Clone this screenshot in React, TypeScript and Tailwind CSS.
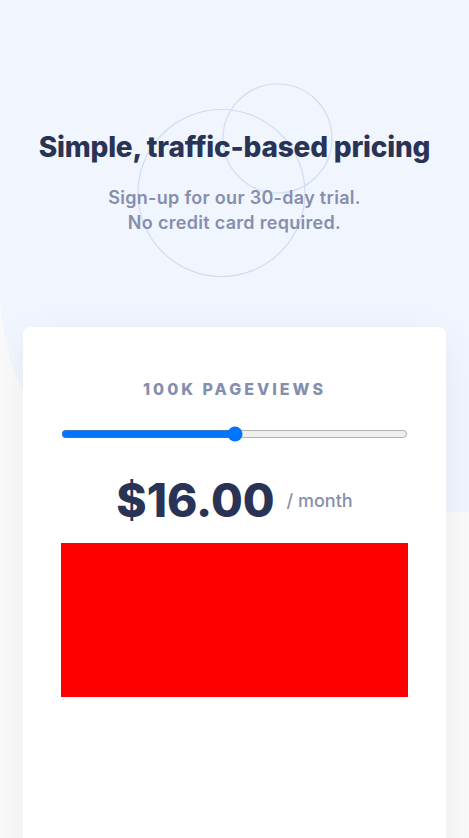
import React from 'react';

const font = { fontFamily: 'Inter, "Noto Sans", sans-serif' };

function Circles() {
  return (
    <svg
      className="absolute left-0 top-0 pointer-events-none"
      width="469"
      height="300"
      viewBox="0 0 469 300"
      fill="none"
    >
      <circle cx="221.5" cy="193" r="83.5" stroke="#d3dbf1" strokeWidth="1.2" />
      <circle cx="277.5" cy="138.5" r="54.5" stroke="#d3dbf1" strokeWidth="1.2" />
    </svg>
  );
}

export default function App() {
  return (
    <div className="min-h-screen bg-[#fafafa] overflow-hidden" style={font}>
      <header className="relative h-[512px] bg-[#f1f5fe] rounded-bl-[220px]">
        <Circles />
        <div className="relative flex flex-col items-center pt-[129px]">
          <h1 className="text-[28px] leading-9 font-extrabold text-[#293356] tracking-[-0.2px]">
            Simple, traffic-based pricing
          </h1>
          <p className="mt-5 text-center text-[18px] leading-[25px] font-semibold tracking-[0.3px] text-[#858fad]">
            Sign-up for our 30-day trial.
            <br />
            No credit card required.
          </p>
        </div>
      </header>

      <main className="relative -mt-[185px] px-[23px]">
        <section className="h-[600px] rounded-lg bg-white pt-[52px] px-[38px] shadow-[0_10px_40px_rgba(0,0,0,0.06)]">
          <p className="text-center text-[16px] leading-5 font-extrabold tracking-[3px] text-[#858fad]">
            100K PAGEVIEWS
          </p>
          <div className="mt-[27px]">
            <input type="range" min={0} max={4} step={1} defaultValue={2} className="block w-full" />
          </div>
          <div className="mt-[30px] flex items-center justify-center gap-3">
            <span className="text-[46px] leading-[56px] font-extrabold text-[#293356]">$16.00</span>
            <span className="text-[18px] font-medium text-[#858fad]">/ month</span>
          </div>
          <div className="mt-[15px] h-[154px] bg-[#ff0000]" />
        </section>
      </main>
    </div>
  );
}
